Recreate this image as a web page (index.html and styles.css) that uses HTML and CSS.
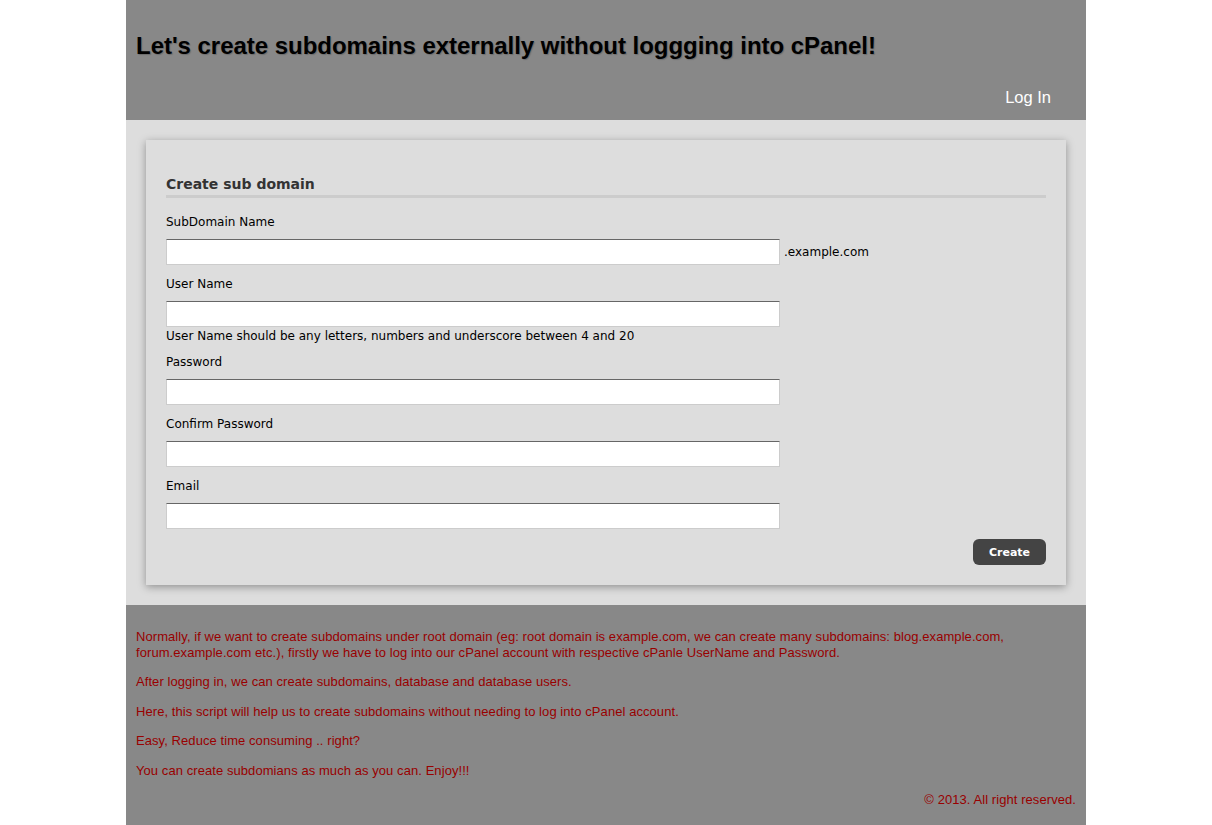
FILE: index.html
```html
<!DOCTYPE html>
<html>
<head>
<meta charset="utf-8">
<title>Create subdomain</title>
<link rel="stylesheet" href="styles.css">
</head>
<body>
<div class="wrap">
  <header class="header">
    <h1 class="title">Let's create subdomains externally without loggging into cPanel!</h1>
    <nav class="nav"><a class="nav-link" href="#">Log In</a></nav>
  </header>
  <main class="main">
    <form class="card">
      <h2 class="card-title">Create sub domain</h2>
      <div class="field">
        <label class="label">SubDomain Name</label>
        <div class="row"><input class="input" type="text"><span class="suffix">.example.com</span></div>
      </div>
      <div class="field">
        <label class="label">User Name</label>
        <div class="row"><input class="input" type="text"></div>
        <div class="hint">User Name should be any letters, numbers and underscore between 4 and 20</div>
      </div>
      <div class="field">
        <label class="label">Password</label>
        <div class="row"><input class="input" type="password"></div>
      </div>
      <div class="field">
        <label class="label">Confirm Password</label>
        <div class="row"><input class="input" type="password"></div>
      </div>
      <div class="field">
        <label class="label">Email</label>
        <div class="row"><input class="input" type="text"></div>
      </div>
      <div class="actions"><button class="btn" type="button">Create</button></div>
    </form>
  </main>
  <footer class="footer">
    <p class="para">Normally, if we want to create subdomains under root domain (eg: root domain is example.com, we can create many subdomains: blog.example.com, forum.example.com etc.), firstly we have to log into our cPanel account with respective cPanle UserName and Password.</p>
    <p class="para">After logging in, we can create subdomains, database and database users.</p>
    <p class="para">Here, this script will help us to create subdomains without needing to log into cPanel account.</p>
    <p class="para">Easy, Reduce time consuming .. right?</p>
    <p class="para">You can create subdomians as much as you can. Enjoy!!!</p>
    <p class="para copy">© 2013. All right reserved.</p>
  </footer>
</div>
</body>
</html>
```

FILE: styles.css
```css
html, body {
  margin: 0;
  padding: 0;
  background: #fff;
}
.wrap {
  width: 960px;
  margin: 0 auto;
  font-family: "Liberation Sans", Arial, sans-serif;
}
.header {
  background: #888888;
  padding: 32px 35px 14px 10px;
}
.title {
  margin: 0;
  font-size: 24px;
  line-height: 28px;
  font-weight: bold;
  color: #000;
  letter-spacing: -0.03px;
  text-shadow: 1px 1px 1px rgba(0,0,0,0.2);
}
.nav {
  margin-top: 28px;
  display: flex;
  justify-content: flex-end;
}
.nav-link {
  color: #fff;
  font-size: 16.5px;
  line-height: 18px;
  text-decoration: none;
}
.main {
  background: #dddddd;
  padding: 20px;
}
.card {
  background: #dddddd;
  box-shadow: 0 2px 8px rgba(0,0,0,0.35);
  padding: 20px;
  margin: 0;
  font-family: "DejaVu Sans", Verdana, sans-serif;
}
.card-title {
  margin: 15px 0 5px;
  font-size: 14px;
  line-height: 19px;
  padding-bottom: 1px;
  font-weight: bold;
  color: #333;
  border-bottom: 3px solid #cccccc;
}
.field {
  display: flex;
  flex-direction: column;
}
.label {
  display: block;
  margin: 10px 0 8px;
  font-size: 12px;
  line-height: 18px;
  color: #000;
}
.row {
  display: flex;
  align-items: center;
}
.input {
  box-sizing: border-box;
  width: 614px;
  height: 26px;
  margin: 0;
  padding: 2px 4px;
  background: #fff;
  border: 1px solid #cccccc;
  border-top-color: #666666;
  outline: none;
  font-size: 13px;
}
.suffix {
  margin-left: 4px;
  font-size: 12px;
  color: #000;
}
.hint {
  padding-top: 2px;
  font-size: 12px;
  line-height: 14px;
  color: #000;
}
.actions {
  display: flex;
  justify-content: flex-end;
  margin-top: 10px;
}
.btn {
  width: 73px;
  height: 26px;
  border: none;
  border-radius: 6px;
  background: #444444;
  color: #fff;
  font-family: "DejaVu Sans", Verdana, sans-serif;
  font-size: 11px;
  font-weight: bold;
  padding: 0;
}
.footer {
  background: #888888;
  padding: 10px 10px 12px;
  color: #990000;
  font-size: 13px;
  line-height: 16px;
  letter-spacing: 0.07px;
}
.para {
  margin: 13.5px 0;
}
.copy {
  text-align: right;
}
```
